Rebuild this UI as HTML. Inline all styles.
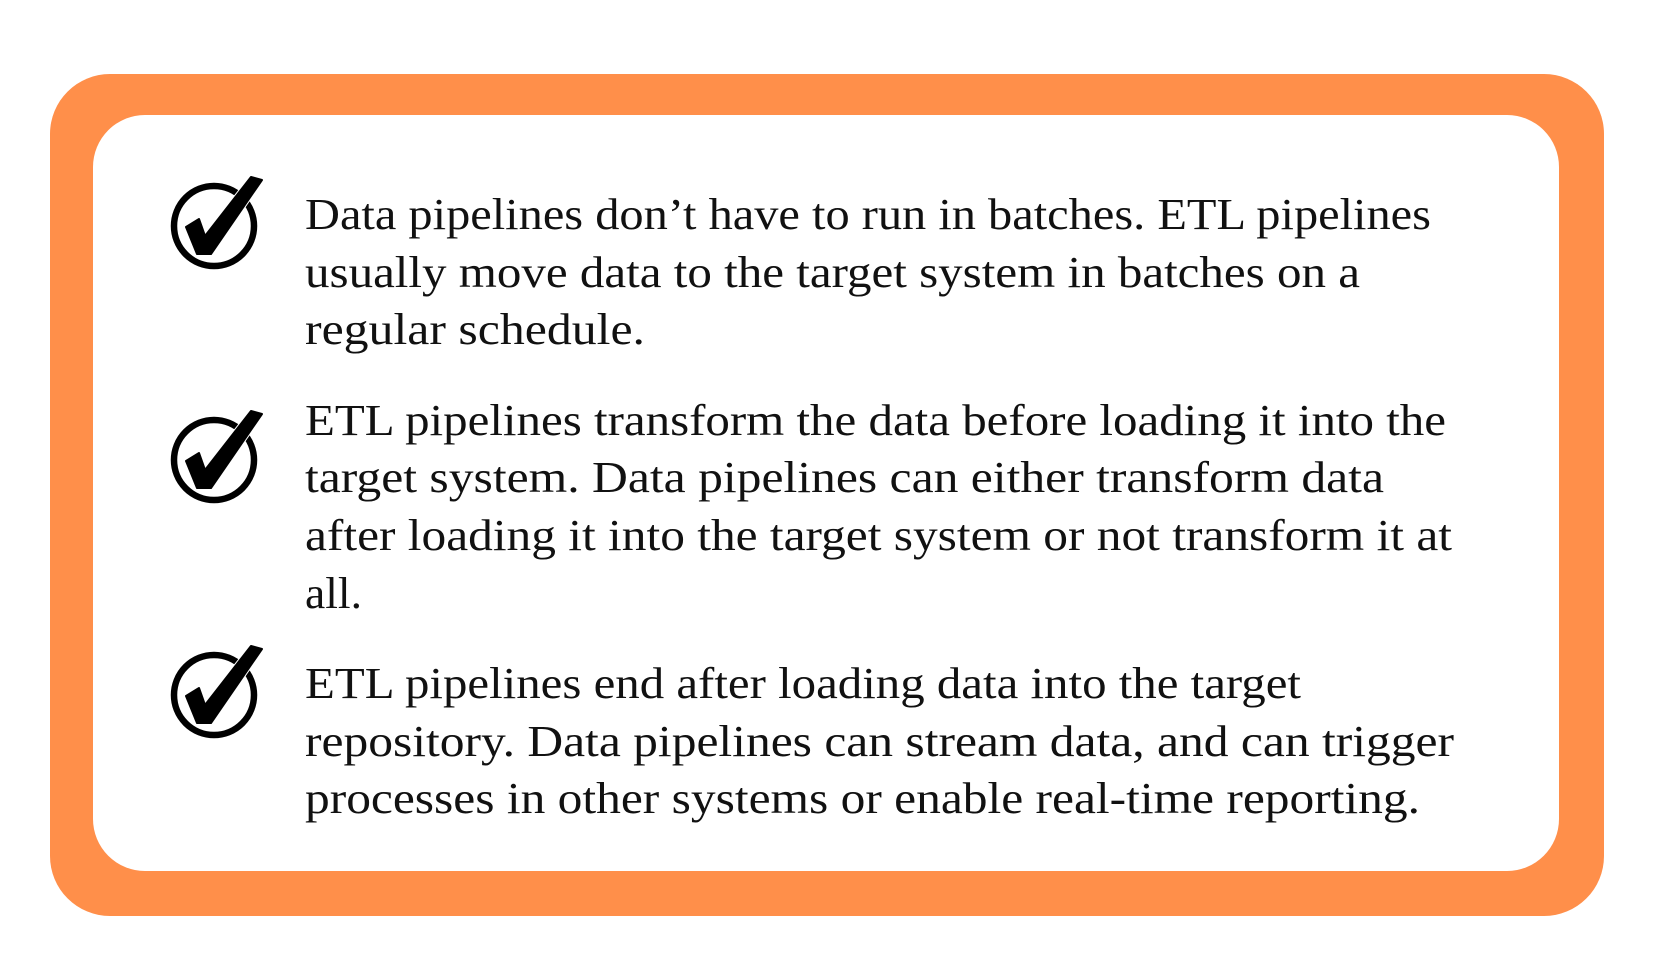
<!DOCTYPE html>
<html><head><meta charset="utf-8"><style>
html,body{margin:0;padding:0;background:#fff;width:1672px;height:977px;overflow:hidden}
svg text{font-family:"Liberation Serif",serif;font-size:44px;fill:#111}
</style></head><body>
<svg width="1672" height="977" viewBox="0 0 1672 977" xmlns="http://www.w3.org/2000/svg">
<rect x="50" y="74" width="1554" height="842" rx="60" fill="#ff8f4a"/>
<rect x="93" y="115" width="1466" height="756" rx="52" fill="#fff"/>
<defs>
<g id="chk">
<circle cx="0" cy="0" r="40" fill="none" stroke="#000" stroke-width="6.5"/>
<polygon points="-28,1 -15,-7 -9,10 37,-49 48,-46 -3,28 -17,28" fill="#000" stroke="#fff" stroke-width="4" stroke-linejoin="round" paint-order="stroke"/>
<polygon points="-28,1 -15,-7 -9,10 37,-49 48,-46 -3,28 -17,28" fill="#000" stroke="#000" stroke-width="2" stroke-linejoin="round"/>
</g>
</defs>
<use href="#chk" x="214" y="226"/>
<use href="#chk" x="214" y="460"/>
<use href="#chk" x="214" y="695"/>
<text x="305" y="229" textLength="1126" lengthAdjust="spacingAndGlyphs">Data pipelines don’t have to run in batches. ETL pipelines</text>
<text x="305" y="287" textLength="1055" lengthAdjust="spacingAndGlyphs">usually move data to the target system in batches on a</text>
<text x="305" y="344" textLength="340" lengthAdjust="spacingAndGlyphs">regular schedule.</text>
<text x="305" y="435" textLength="1141" lengthAdjust="spacingAndGlyphs">ETL pipelines transform the data before loading it into the</text>
<text x="305" y="492" textLength="1079" lengthAdjust="spacingAndGlyphs">target system. Data pipelines can either transform data</text>
<text x="305" y="550" textLength="1147" lengthAdjust="spacingAndGlyphs">after loading it into the target system or not transform it at</text>
<text x="305" y="608" textLength="57" lengthAdjust="spacingAndGlyphs">all.</text>
<text x="305" y="698" textLength="996" lengthAdjust="spacingAndGlyphs">ETL pipelines end after loading data into the target</text>
<text x="305" y="756" textLength="1149" lengthAdjust="spacingAndGlyphs">repository. Data pipelines can stream data, and can trigger</text>
<text x="305" y="813" textLength="1115" lengthAdjust="spacingAndGlyphs">processes in other systems or enable real-time reporting.</text>
</svg>
</body></html>
